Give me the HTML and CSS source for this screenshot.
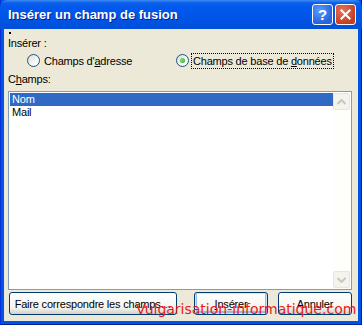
FILE: index.html
```html
<!doctype html>
<html lang="fr">
    <head>
        <meta charset="utf-8">
        <title>Insérer un champ de fusion</title>
        <link rel="stylesheet" href="styles.css">
    </head>
    <body>
        <div class="window">
            <div class="titlebar">
                <span class="title">Insérer un champ de fusion</span>
                <div class="caption-buttons">
                    <span class="cap help">?</span>
                    <span class="cap close">
                        <svg viewBox="0 0 21 21" width="21" height="21">
                            <path d="M6 6 L15 15 M15 6 L6 15" stroke="#fff" stroke-width="2.2" stroke-linecap="square"/>
                        </svg>
                    </span>
                </div>
            </div>

            <div class="client">
                <div class="dot"></div>
                <div class="label first">Insérer :</div>

                <div class="radios">
                    <span class="radio">
                        <span class="bullet"></span>
                        <span class="text">Champs d'<u>a</u>dresse</span>
                    </span>
                    <span class="radio checked">
                        <span class="bullet"><span class="pip"></span></span>
                        <span class="text focus">Champs de base de <u>d</u>onnées</span>
                    </span>
                </div>

                <div class="label">C<u>h</u>amps:</div>

                <div class="listbox">
                    <div class="items">
                        <div class="item selected">Nom</div>
                        <div class="item">Mail</div>
                    </div>
                    <div class="scrollbar">
                        <span class="arrow up">
                            <svg viewBox="0 0 9 6" width="9" height="6"><path d="M0.5 5 L4.5 1 L8.5 5" fill="none" stroke="#c9c7ba" stroke-width="2"/></svg>
                        </span>
                        <span class="track"></span>
                        <span class="arrow down">
                            <svg viewBox="0 0 9 6" width="9" height="6"><path d="M0.5 1 L4.5 5 L8.5 1" fill="none" stroke="#c9c7ba" stroke-width="2"/></svg>
                        </span>
                    </div>
                </div>

                <div class="buttons">
                    <span class="btn wide">Faire correspondre les champs…</span>
                    <span class="spacer"></span>
                    <span class="btn default"><u>I</u>nsérer</span>
                    <span class="btn">Annuler</span>
                </div>
            </div>

            <div class="watermark">Vulgarisation-informatique.com</div>
        </div>
    </body>
</html>
```

FILE: styles.css
```css
body {
    margin: 0;
    font-family: "Liberation Sans", Arial, sans-serif;
    font-size: 11px;
    letter-spacing: -0.2px;
    color: #000;
}

.window {
    position: relative;
    width: 362px;
    height: 325px;
    box-sizing: border-box;
    display: flex;
    flex-direction: column;
    background: #0054e3;
    padding: 0 3px 3px 3px;
    border-left: 1px solid #0831d9;
    border-right: 1px solid #001ea0;
    border-bottom: 1px solid #001ea0;
}

.titlebar {
    height: 29px;
    margin: 0 -4px;
    padding: 0 6px 0 8px;
    display: flex;
    align-items: center;
    background: linear-gradient(#3d8cf5 0, #0a5fe9 3px, #0058ee 8px, #0054e3 20px, #0050d8 29px);
    border-radius: 7px 7px 0 0;
}

.title {
    flex: 1;
    color: #fff;
    font-weight: bold;
    font-size: 13px;
    letter-spacing: 0;
    text-shadow: 1px 1px 0 #0a1e8c;
}

.caption-buttons {
    display: flex;
    gap: 2px;
}

.cap {
    width: 21px;
    height: 21px;
    box-sizing: border-box;
    border: 1px solid #fff;
    border-radius: 3px;
    display: flex;
    align-items: center;
    justify-content: center;
    color: #fff;
}

.help {
    background: radial-gradient(circle at 35% 30%, #5a9cff, #2663e0 70%);
    font-weight: bold;
    font-size: 15px;
}

.close {
    background: radial-gradient(circle at 35% 30%, #e7735e, #c4411f 70%);
}

.client {
    flex: 1;
    background: #ece9d8;
    padding: 0 6px 6px 4px;
    display: flex;
    flex-direction: column;
}

.dot {
    width: 2px;
    height: 2px;
    background: #000;
    margin: 3px 0 0 1px;
}

.label {
    line-height: 13px;
}

.label.first {
    margin-top: 3px;
}

.radios {
    display: flex;
    margin: 2px 0 4px 0;
    height: 17px;
    align-items: center;
    white-space: nowrap;
}

.radio {
    display: flex;
    align-items: center;
}

.radio:first-child {
    margin-left: 19px;
    width: 149px;
}

.bullet {
    width: 13px;
    height: 13px;
    box-sizing: border-box;
    border: 1px solid #1c5180;
    border-radius: 50%;
    background: linear-gradient(135deg, #dcdcd5, #fff 80%);
    display: flex;
    align-items: center;
    justify-content: center;
    margin-right: 4px;
}

.pip {
    width: 5px;
    height: 5px;
    border-radius: 50%;
    background: radial-gradient(circle at 40% 40%, #7be870, #21a121);
}

.text.focus {
    outline: 1px dotted #000;
    padding: 1px 1px;
    margin-left: -1px;
}

.listbox {
    flex: 1;
    margin: 5px 0 2px 0;
    border: 1px solid #7f9db9;
    background: #fff;
    display: flex;
    padding: 1px;
}

.items {
    flex: 1;
}

.item {
    height: 13px;
    line-height: 13px;
    padding-left: 2px;
}

.item.selected {
    background: #316ac5;
    color: #fff;
}

.scrollbar {
    width: 17px;
    display: flex;
    flex-direction: column;
    background: #fefefb;
}

.arrow {
    height: 17px;
    box-sizing: border-box;
    border: 1px solid #e8e6dc;
    border-radius: 2px;
    background: #f4f3ee;
    display: flex;
    align-items: center;
    justify-content: center;
}

.track {
    flex: 1;
}

.buttons {
    display: flex;
    height: 23px;
    margin-left: 1px;
}

.btn {
    box-sizing: border-box;
    width: 74px;
    height: 23px;
    border: 1px solid #003c74;
    border-radius: 3px;
    background: linear-gradient(#fff, #f4f4f0 70%, #d6d0c5);
    display: flex;
    align-items: center;
    justify-content: center;
    white-space: nowrap;
}

.btn + .btn {
    margin-left: 10px;
}

.btn.wide {
    width: 168px;
}

.btn.default {
    box-shadow: inset 0 0 0 1px #cee7ff, inset 0 -1px 0 2px #98b8ea;
}

.spacer {
    width: 17px;
}

.watermark {
    position: absolute;
    left: 135px;
    top: 301px;
    color: #e51c1c;
    font-family: "DejaVu Sans", sans-serif;
    font-size: 14px;
    letter-spacing: 0;
    white-space: nowrap;
}
```
